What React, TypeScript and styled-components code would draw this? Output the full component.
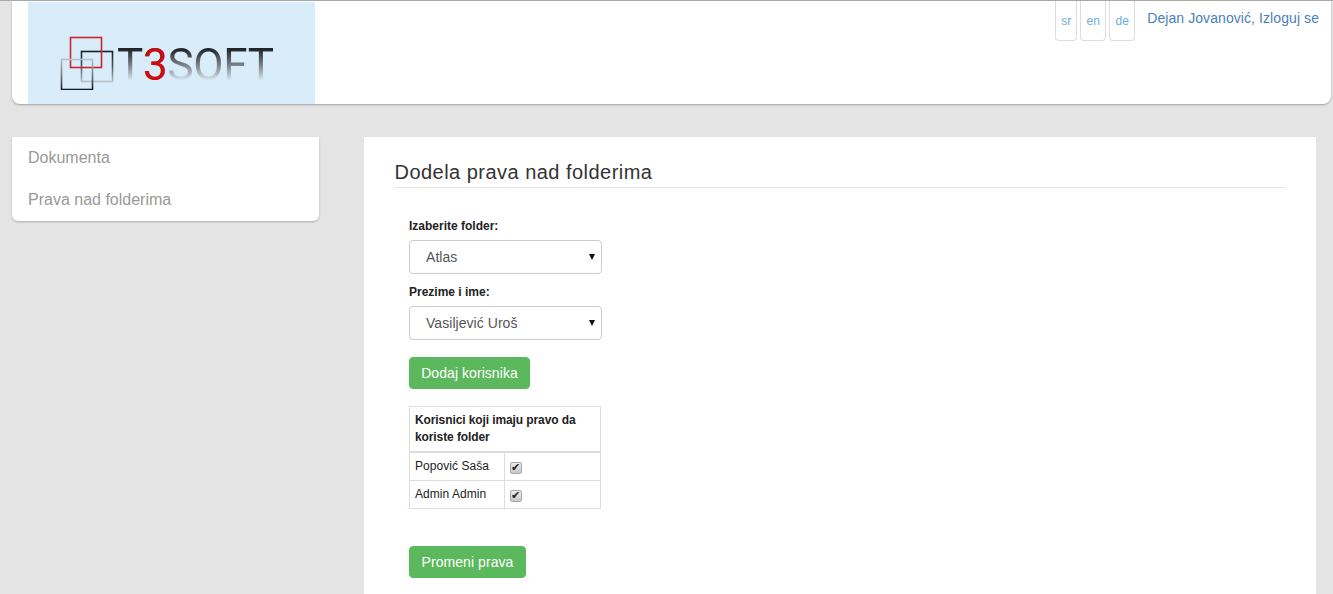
import React from "react";
import styled, { createGlobalStyle } from "styled-components";

const Global = createGlobalStyle`
  html, body { margin: 0; padding: 0; height: 594px; overflow: hidden; background: #e4e4e4; }
  body { font-family: "Liberation Sans", Arial, sans-serif; font-size: 14px; color: #333; }
  * { box-sizing: border-box; }
`;

const Page = styled.div`
  height: 594px;
  overflow: hidden;
  border-top: 1px solid #a8a8a8;
`;

const Header = styled.header`
  height: 103px;
  margin: 0 2px 0 12px;
  padding-left: 16px;
  display: flex;
  justify-content: space-between;
  background: #fff;
  border-radius: 0 0 8px 8px;
  box-shadow: 0 1px 2px rgba(0, 0, 0, 0.3);
`;

const LogoBox = styled.div`
  width: 287px;
  height: 102px;
  margin-top: 1px;
  padding: 32px 0 0 32px;
  display: flex;
  align-items: flex-start;
  background: #d9ecf9;
`;

const LogoMark = styled.svg`
  width: 62px;
  height: 56px;
  flex: none;
`;

const LogoText = styled.span`
  margin: 9px 0 0 -5px;
  font-family: Roboto, sans-serif;
  font-size: 44px;
  line-height: 44px;
  letter-spacing: -0.3px;
  background: linear-gradient(#1f2428 14%, #80868b 52%, #d9ecf9 86%);
  -webkit-background-clip: text;
  background-clip: text;
  color: transparent;
`;

const LogoThree = styled.span`
  color: #cc0a0f;
`;

const HeaderRight = styled.div`
  display: flex;
  align-items: flex-start;
  padding-right: 12px;
`;

const Lang = styled.a<{ $w: number }>`
  width: ${(p) => p.$w}px;
  height: 40px;
  margin-right: 3px;
  display: flex;
  align-items: center;
  justify-content: center;
  color: #6aaedb;
  font-size: 12px;
  border: 1px solid #ddd;
  border-top: none;
  border-radius: 0 0 4px 4px;
`;

const UserLink = styled.a`
  margin-left: 9px;
  margin-top: 10px;
  line-height: 15px;
  letter-spacing: 0.08px;
  color: #4a7fbb;
  font-size: 14px;
`;

const Main = styled.div`
  display: flex;
  margin: 33px 17px 0 12px;
  align-items: flex-start;
  gap: 45px;
`;

const Sidebar = styled.nav`
  width: 307px;
  flex: none;
  background: #fff;
  border-radius: 0 0 6px 6px;
  box-shadow: 0 1px 2px rgba(0, 0, 0, 0.25);
`;

const NavItem = styled.a`
  display: block;
  height: 42px;
  padding-left: 16px;
  line-height: 42px;
  color: #999;
  font-size: 16px;
`;

const Content = styled.main`
  flex: 1;
  height: 460px;
  padding: 20px 30px 0;
  background: #fff;
`;

const Title = styled.h1`
  margin: 0;
  height: 31px;
  padding-left: 0.5px;
  font-size: 20px;
  line-height: 30px;
  font-weight: 400;
  letter-spacing: 0.47px;
  color: #333;
  border-bottom: 1px solid #e6e6e6;
`;

const Form = styled.div`
  padding: 30px 0 0 15px;
`;

const Label = styled.label`
  display: block;
  height: 22px;
  font-size: 12px;
  line-height: 17px;
  font-weight: 700;
  color: #222;
`;

const SelectWrap = styled.div`
  position: relative;
  width: 193px;
  margin-bottom: 10px;

  &::after {
    content: "";
    position: absolute;
    top: 14px;
    right: 7px;
    border-left: 3.5px solid transparent;
    border-right: 3.5px solid transparent;
    border-top: 6px solid #111;
    pointer-events: none;
  }
`;

const Select = styled.select`
  display: block;
  width: 100%;
  height: 34px;
  padding: 0 16px;
  appearance: none;
  font-family: inherit;
  font-size: 14px;
  letter-spacing: 0.05px;
  color: #555;
  background: #fff;
  border: 1px solid #ccc;
  border-radius: 4px;
`;

const GreenButton = styled.button<{ $w: number; $top?: number }>`
  display: block;
  width: ${(p) => p.$w}px;
  height: 32px;
  margin-top: ${(p) => p.$top ?? 0}px;
  padding: 0;
  font-family: inherit;
  font-size: 14px;
  letter-spacing: 0.06px;
  color: #fff;
  background: #5cb85c;
  border: 1px solid #5cb85c;
  border-radius: 4px;
`;

const Table = styled.table`
  width: 192px;
  margin: 17px 0 37px;
  table-layout: fixed;
  border-collapse: collapse;
  font-size: 12px;
  color: #222;
`;

const Th = styled.th`
  height: 45px;
  padding: 5px;
  text-align: left;
  line-height: 17px;
  font-size: 12px;
  letter-spacing: -0.1px;
  color: #222;
  border: 1px solid #ddd;
  border-bottom-width: 2px;
`;

const NameCell = styled.td`
  width: 95px;
  height: 28px;
  padding: 0 5px;
  letter-spacing: 0.05px;
  border: 1px solid #ddd;
`;

const CheckCell = styled.td`
  padding: 4px 0 0 5px;
  border: 1px solid #ddd;
`;

const Check = styled.input`
  display: block;
  position: relative;
  width: 12px;
  height: 12px;
  margin: 0;
  appearance: none;
  background: linear-gradient(#ededed, #c8c8c8);
  border: 1px solid #a8a8a8;
  border-radius: 2px;

  &::after {
    content: "✔";
    position: absolute;
    left: 0;
    top: -2px;
    font-family: "DejaVu Sans", sans-serif;
    font-size: 11px;
    line-height: 13px;
    color: #222;
  }
`;

export default function App() {
  return (
    <Page>
      <Global />
      <Header>
        <LogoBox>
          <LogoMark viewBox="0 0 62 56" aria-hidden="true">
            <defs>
              <linearGradient id="dark" gradientUnits="userSpaceOnUse" x1="0" y1="17" x2="0" y2="48">
                <stop offset="0" stopColor="#141c24" />
                <stop offset="0.5" stopColor="#4b555e" />
                <stop offset="1" stopColor="#bcc3c8" />
              </linearGradient>
              <linearGradient id="light" gradientUnits="userSpaceOnUse" x1="0" y1="25" x2="0" y2="56">
                <stop offset="0" stopColor="#bcc4ca" />
                <stop offset="0.55" stopColor="#67727b" />
                <stop offset="1" stopColor="#10181f" />
              </linearGradient>
            </defs>
            <rect x="21.5" y="17.5" width="31" height="30" fill="none" stroke="url(#dark)" strokeWidth="1.6" />
            <rect x="10.5" y="3.5" width="31" height="30" fill="none" stroke="#c8252d" strokeWidth="1.6" />
            <rect x="1.5" y="25.5" width="31" height="30" fill="none" stroke="url(#light)" strokeWidth="1.6" />
          </LogoMark>
          <LogoText>T<LogoThree>3</LogoThree>SOFT</LogoText>
        </LogoBox>
        <HeaderRight>
          <Lang $w={22}>sr</Lang>
          <Lang $w={26}>en</Lang>
          <Lang $w={26}>de</Lang>
          <UserLink>Dejan Jovanović, Izloguj se</UserLink>
        </HeaderRight>
      </Header>
      <Main>
        <Sidebar>
          <NavItem>Dokumenta</NavItem>
          <NavItem>Prava nad folderima</NavItem>
        </Sidebar>
        <Content>
          <Title>Dodela prava nad folderima</Title>
          <Form>
            <Label>Izaberite folder:</Label>
            <SelectWrap>
              <Select defaultValue="Atlas">
                <option>Atlas</option>
              </Select>
            </SelectWrap>
            <Label>Prezime i ime:</Label>
            <SelectWrap>
              <Select defaultValue="Vasiljević Uroš">
                <option>Vasiljević Uroš</option>
              </Select>
            </SelectWrap>
            <GreenButton $w={121} $top={17}>Dodaj korisnika</GreenButton>
            <Table>
              <colgroup>
                <col width="95" />
                <col />
              </colgroup>
              <thead>
                <tr>
                  <Th colSpan={2}>Korisnici koji imaju pravo da koriste folder</Th>
                </tr>
              </thead>
              <tbody>
                <tr>
                  <NameCell>Popović Saša</NameCell>
                  <CheckCell><Check type="checkbox" defaultChecked /></CheckCell>
                </tr>
                <tr>
                  <NameCell>Admin Admin</NameCell>
                  <CheckCell><Check type="checkbox" defaultChecked /></CheckCell>
                </tr>
              </tbody>
            </Table>
            <GreenButton $w={117}>Promeni prava</GreenButton>
          </Form>
        </Content>
      </Main>
    </Page>
  );
}
